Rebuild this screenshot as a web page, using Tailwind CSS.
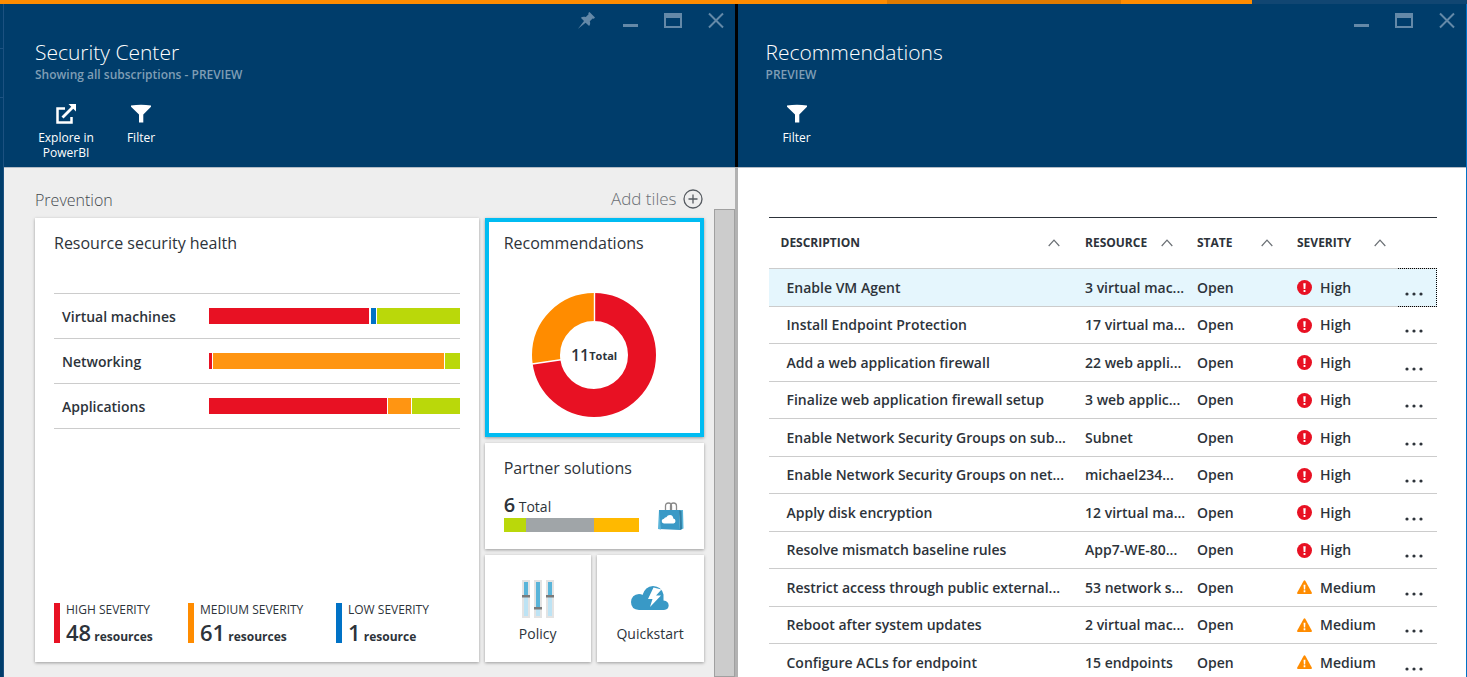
<!DOCTYPE html>
<html lang="en">
<head>
<meta charset="utf-8">
<title>Security Center</title>
<script src="https://cdn.jsdelivr.net/npm/@tailwindcss/browser@4"></script>
</head>
<body class="h-screen overflow-hidden bg-[#003d6b] font-['Open_Sans','Noto_Sans',sans-serif] text-[#2d333a] flex flex-col">
<svg class="hidden">
  <symbol id="min" viewBox="0 0 18 18"><path d="M2 14.500h15" stroke="currentColor" stroke-width="3"/></symbol>
  <symbol id="max" viewBox="0 0 18 18"><path fill="currentColor" fill-rule="evenodd" d="M0 2h18v15H0zM2 7v8h14V7z"/></symbol>
  <symbol id="close" viewBox="0 0 18 18"><path d="M2 2.500l14 14M16 2.500l-14 14" stroke="currentColor" stroke-width="2"/></symbol>
  <symbol id="pin" viewBox="0 0 18 18"><path fill="currentColor" d="M11.500 1L17 6.500l-1.200 1.200-1.200-.3-2.800 2.800c.7 1.800.4 3.600-.7 4.900L7.600 11.700 1 17 0 18l.8-1.200L6 10 2.800 6.800c1.400-1.200 3.200-1.400 5-.7l2.800-2.800-.3-1.200z"/></symbol>
  <symbol id="filter" viewBox="0 0 20 18"><path fill="currentColor" d="M0 .5Q10-.8 20 .5V1.800L12.300 9.500V17.500H8V9.500L0 1.800z"/></symbol>
  <symbol id="up" viewBox="0 0 12 8"><path d="M.7 7L6 1.200 11.300 7" fill="none" stroke="#6b7075" stroke-width="1.200"/></symbol>
  <symbol id="high" viewBox="0 0 16 16"><circle cx="8" cy="8" r="8" fill="#e81123"/><path fill="#fff" d="M6.700 3.500h2.600L8.900 9.500H7.100zM7 10.700h2v2H7z"/></symbol>
  <symbol id="medium" viewBox="0 0 16 16"><path fill="#ff8c00" d="M7 1q1-1.500 2 0L15.900 13.500q.2 1.500-.9 1.500H1q-1.100 0-.9-1.500z"/><path fill="#fff" d="M7 5h2L8.700 10H7.300zM7.100 11h1.800v2H7.100z"/></symbol>
</svg>

<div class="flex h-1 shrink-0 bg-[#114672]">
  <div class="bg-[#ff8c00]" style="width:60.450%"></div>
  <div class="bg-[#e07b00]" style="width:15.950%"></div>
  <div class="bg-[#ff8c00]" style="width:8.950%"></div>
</div>

<div class="flex min-h-0 grow">
  <div class="flex w-1 shrink-0 flex-col border-r border-[#1c5180]">
    <div class="h-[45px] border-b border-[#1c5180]"></div>
    <div class="h-[49px] border-b border-[#1c5180]"></div>
  </div>

  <!-- Security Center blade -->
  <section class="flex min-w-0 flex-[731] flex-col bg-[#eeeeee]">
    <header class="flex h-[164px] shrink-0 flex-col border-b border-[#b3bcc6] bg-[#003d6b] pl-[31px] text-white">
      <div class="flex h-8 items-center justify-end gap-[25px] pr-[10px] text-[#6489a8]">
        <button aria-label="Pin"><svg class="block size-[18px]"><use href="#pin"/></svg></button>
        <button aria-label="Minimize"><svg class="block size-[18px]"><use href="#min"/></svg></button>
        <button aria-label="Maximize"><svg class="block size-[18px]"><use href="#max"/></svg></button>
        <button aria-label="Close"><svg class="block size-[18px]"><use href="#close"/></svg></button>
      </div>
      <h1 class="text-[21px] leading-8 font-[350]">Security Center</h1>
      <p class="text-xs leading-[14px] font-semibold text-[#7f9db5]">Showing all subscriptions - PREVIEW</p>
      <div class="mt-[22px] flex items-start gap-5 text-xs leading-[15px]">
        <button class="flex w-[62px] flex-col items-center gap-[6px]">
          <svg class="h-5 w-5" viewBox="0 0 20 20"><path d="M9 4.500H1.500v14h14V13" fill="none" stroke="#fff" stroke-width="2.500"/><path d="M6.500 13.500L17 3" stroke="#fff" stroke-width="2.800"/><path d="M12.500 0H20v7.500z" fill="#fff"/></svg>
          <span>Explore in PowerBI</span>
        </button>
        <button class="flex w-12 flex-col items-center gap-[6px]">
          <svg class="h-5 w-5"><use href="#filter"/></svg>
          <span>Filter</span>
        </button>
      </div>
    </header>

    <div class="flex min-h-0 grow">
      <div class="min-w-0 grow pl-[31px] pr-[10px]">
        <div class="flex h-[50px] items-center justify-between pt-3">
          <h2 class="pt-[2px] text-base font-[350] text-[#44494f]">Prevention</h2>
          <button class="flex items-center gap-[6px] text-[17px] font-[350] text-[#6c7075]">Add tiles
            <svg class="mr-[1px] size-5" viewBox="0 0 20 20" fill="none" stroke="#565b61" stroke-width="1.300"><circle cx="10" cy="10" r="9"/><path d="M10 5.500v9M5.500 10h9"/></svg>
          </button>
        </div>
        <div class="grid grid-cols-[minmax(0,444fr)_minmax(0,106fr)_minmax(0,107fr)] grid-rows-[219px_106px_107px] gap-[6px]">
          <article class="row-span-3 flex flex-col bg-white px-[19px] shadow-[0_1px_3px_rgba(0,0,0,0.35)]">
            <h3 class="pt-3 text-base leading-[26px]">Resource security health</h3>
            <ul class="mt-[37px] border-t border-[#cccccc] text-sm font-semibold">
              <li class="flex h-[45px] items-center border-b border-[#cccccc] pl-2">
                <span class="w-[147px] shrink-0 pt-[2px]">Virtual machines</span>
                <span class="flex h-4 grow"><i class="bg-[#e81123]" style="width:63.700%"></i><i class="ml-[2px] bg-[#0072c6]" style="width:2%"></i><i class="ml-px grow bg-[#bad80a]"></i></span>
              </li>
              <li class="flex h-[45px] items-center border-b border-[#cccccc] pl-2">
                <span class="w-[147px] shrink-0 pt-[2px]">Networking</span>
                <span class="flex h-4 grow"><i class="bg-[#e81123]" style="width:1.200%"></i><i class="ml-px bg-[#ff9512]" style="width:92%"></i><i class="ml-px grow bg-[#bad80a]"></i></span>
              </li>
              <li class="flex h-[45px] items-center border-b border-[#cccccc] pl-2">
                <span class="w-[147px] shrink-0 pt-[2px]">Applications</span>
                <span class="flex h-4 grow"><i class="bg-[#e81123]" style="width:71%"></i><i class="ml-px bg-[#ff9512]" style="width:9.200%"></i><i class="ml-px grow bg-[#bad80a]"></i></span>
              </li>
            </ul>
            <dl class="mt-auto mb-[19px] flex">
              <div class="h-10 w-[134px] border-l-6 border-[#e81123] pl-[6px]">
                <dt class="text-xs leading-[14px]">HIGH SEVERITY</dt>
                <dd class="text-xs leading-[30px] font-bold"><span class="text-[22px] font-semibold">48</span> resources</dd>
              </div>
              <div class="h-10 w-[148px] border-l-6 border-[#ff8c00] pl-[6px]">
                <dt class="text-xs leading-[14px]">MEDIUM SEVERITY</dt>
                <dd class="text-xs leading-[30px] font-bold"><span class="text-[22px] font-semibold">61</span> resources</dd>
              </div>
              <div class="h-10 border-l-6 border-[#0072c6] pl-[6px]">
                <dt class="text-xs leading-[14px]">LOW SEVERITY</dt>
                <dd class="text-xs leading-[30px] font-bold"><span class="text-[22px] font-semibold">1</span> resource</dd>
              </div>
            </dl>
          </article>

          <article class="col-span-2 flex flex-col border-4 border-[#00bcf2] bg-white shadow-[0_1px_3px_rgba(0,0,0,0.35)]">
            <h3 class="pt-2 pl-[15px] text-base leading-[26px]">Recommendations</h3>
            <div class="relative mx-auto mt-[37px] size-[124px]">
              <svg class="size-full" viewBox="-62 -62 124 124" fill="none">
                <circle r="48" stroke="#e81123" stroke-width="28" pathLength="11" stroke-dasharray="8 3" transform="rotate(-90)"/>
                <circle r="48" stroke="#ff8c00" stroke-width="28" pathLength="11" stroke-dasharray="3 8" stroke-dashoffset="-8" transform="rotate(-90)"/>
                <path d="M.5-33V-62M-33 4.800L-62 9" stroke="#fff" stroke-width="1.400"/>
              </svg>
              <p class="absolute inset-0 flex items-center justify-center"><span class="text-base font-semibold">11</span><span class="pt-[3px] text-[11px] font-bold">Total</span></p>
            </div>
          </article>

          <article class="col-span-2 bg-white px-[19px] shadow-[0_1px_3px_rgba(0,0,0,0.35)]">
            <h3 class="pt-3 text-base leading-[26px]">Partner solutions</h3>
            <div class="mt-3 flex items-start justify-between">
              <div class="flex grow flex-col">
                <p class="text-sm leading-[23px]"><span class="text-xl leading-[23px] font-semibold">6</span> Total</p>
                <div class="flex h-[14px]"><i class="bg-[#bad80a]" style="width:16.300%"></i><i class="bg-[#a0a5a8]" style="width:50.400%"></i><i class="grow bg-[#ffb900]"></i></div>
              </div>
              <svg class="mt-[9px] mr-[1px] ml-[19px] h-[29px] w-[26px]" viewBox="0 0 26 29"><path d="M7.500 8V4q0-3 3-3t3 3v4M12.500 8V4q0-3 3-3t3 3v4" fill="none" stroke="#8a8a8a" stroke-width="1.300"/><path fill="#3999c6" d="M1 8H21L22 28 1 27z"/><path fill="#59b4d9" d="M1 8L0 27 3 27.500zM21 8h4l.5 18.500L22 28z"/><path fill="#2f80a6" d="M21 8l2.500 1 .5 18-2 1z"/><path fill="#fff" d="M6 21.500q-2.300-.3-2.300-2.400 0-2 2.300-2.300.6-1.800 2.300-1.600Q9.500 13 12 13q3.200.3 3.300 3.600 2.200.2 2.200 2.500t-2 2.400z"/></svg>
            </div>
          </article>

          <a href="#policy" class="flex flex-col items-center bg-white pt-[25px] text-sm leading-5 shadow-[0_1px_3px_rgba(0,0,0,0.35)]">
            <svg class="h-[38px] w-8" viewBox="0 0 32 38"><path fill="#e3e3e3" d="M0 0h8v38H0zM12 0h8v38h-8zM24 0h8v38h-8z"/><path fill="#bde3f4" d="M2 2h4v34H2zM14 2h4v34h-4zM26 2h4v34h-4z"/><path fill="#59b4d9" d="M2 2h4v13H2zM14 2h4v25h-4zM26 2h4v13h-4z"/><path fill="#7a7a7a" d="M0 15h8v2.500H0zM12 27h8v2.500h-8zM24 15h8v2.500h-8z"/></svg>
            <span class="mt-[6px]">Policy</span>
          </a>
          <a href="#quickstart" class="flex flex-col items-center bg-white pt-[31px] text-sm leading-5 shadow-[0_1px_3px_rgba(0,0,0,0.35)]">
            <svg class="h-6 w-[38px]" viewBox="0 0 38 24"><path fill="#3999c6" d="M8 24Q0 23.500 0 16 .5 8.500 8 8q2.500.2 3.500 1Q14 .5 22 0q8.500.3 10.500 8.500v6q5 .5 5.200 5Q37.500 23.500 33 24z"/><path fill="#fff" d="M22.500 1.500L17 13h4.500L19 21 30 9.500h-5L30.500 3.500z"/></svg>
            <span class="mt-[14px]">Quickstart</span>
          </a>
        </div>
      </div>
      <div class="mt-[41px] w-[21px] shrink-0 border border-[#a0a0a0] bg-[#cccccc]"></div>
    </div>
  </section>

  <div class="flex w-[3px] shrink-0 flex-col"><div class="h-[163px] bg-black"></div><div class="grow bg-[#b2b2b2]"></div></div>

  <!-- Recommendations blade -->
  <section class="flex min-w-0 flex-[729] flex-col border-r border-[#0072c6] bg-white">
    <header class="flex h-[164px] shrink-0 flex-col border-b border-[#b3bcc6] bg-[#003d6b] pl-[28px] text-white">
      <div class="flex h-8 items-center justify-end gap-[25px] pr-[10px] text-[#6489a8]">
        <button aria-label="Minimize"><svg class="block size-[18px]"><use href="#min"/></svg></button>
        <button aria-label="Maximize"><svg class="block size-[18px]"><use href="#max"/></svg></button>
        <button aria-label="Close"><svg class="block size-[18px]"><use href="#close"/></svg></button>
      </div>
      <h1 class="text-[21px] leading-8 font-[350]">Recommendations</h1>
      <p class="text-xs leading-[14px] font-semibold text-[#7f9db5]">PREVIEW</p>
      <div class="mt-[22px] flex text-xs leading-[15px]">
        <button class="flex w-[62px] flex-col items-center gap-[6px]">
          <svg class="h-5 w-5"><use href="#filter"/></svg>
          <span>Filter</span>
        </button>
      </div>
    </header>
    <div class="pt-[49px] pr-[29px] pl-[31px]">
      <table class="w-full table-fixed border-collapse text-left text-sm font-semibold">
        <colgroup><col><col class="w-[112px]"><col class="w-[100px]"><col class="w-[101px]"><col class="w-[39px]"></colgroup>
        <thead class="border-t border-[#2d333a] text-xs">
          <tr class="h-[51px] border-b border-[#cccccc]">
            <th class="pl-3"><span class="flex items-center justify-between pr-[25px]">DESCRIPTION<svg class="h-2 w-3"><use href="#up"/></svg></span></th>
            <th><span class="flex items-center justify-between pr-6">RESOURCE<svg class="h-2 w-3"><use href="#up"/></svg></span></th>
            <th><span class="flex items-center justify-between pr-6">STATE<svg class="h-2 w-3"><use href="#up"/></svg></span></th>
            <th><span class="flex items-center justify-between pr-3">SEVERITY<svg class="h-2 w-3"><use href="#up"/></svg></span></th>
            <th aria-label="Actions"></th>
          </tr>
        </thead>
        <tbody id="rows"></tbody>
      </table>
    </div>
  </section>
</div>

<script>
const rows = [
  ["Enable VM Agent", "3 virtual mac...", "High"],
  ["Install Endpoint Protection", "17 virtual ma...", "High"],
  ["Add a web application firewall", "22 web appli...", "High"],
  ["Finalize web application firewall setup", "3 web applic...", "High"],
  ["Enable Network Security Groups on sub...", "Subnet", "High"],
  ["Enable Network Security Groups on net...", "michael234...", "High"],
  ["Apply disk encryption", "12 virtual ma...", "High"],
  ["Resolve mismatch baseline rules", "App7-WE-80...", "High"],
  ["Restrict access through public external...", "53 network s...", "Medium"],
  ["Reboot after system updates", "2 virtual mac...", "Medium"],
  ["Configure ACLs for endpoint", "15 endpoints", "Medium"]
];
document.getElementById("rows").innerHTML = rows.map(([d, r, s]) => `
  <tr class="group border-b border-[#cccccc] odd:h-[38px] even:h-[37px] first:bg-[#e5f6fd]">
    <td class="truncate pl-[18px]">${d}</td>
    <td class="whitespace-nowrap">${r}</td>
    <td>Open</td>
    <td><span class="flex items-center gap-2"><svg class="size-[15px]"><use href="#${s.toLowerCase()}"/></svg>${s}</span></td>
    <td class="relative p-0"><span class="absolute inset-x-0 -inset-y-px hidden border border-l-0 border-dotted border-black group-first:block"></span><button class="relative block pt-3 pl-[7px]" aria-label="More actions for ${d}"><svg class="h-1 w-[18px]" viewBox="0 0 18 4" fill="#2d333a"><circle cx="2" cy="2" r="1.600"/><circle cx="9" cy="2" r="1.600"/><circle cx="16" cy="2" r="1.600"/></svg></button></td>
  </tr>`).join("");
</script>
</body>
</html>
